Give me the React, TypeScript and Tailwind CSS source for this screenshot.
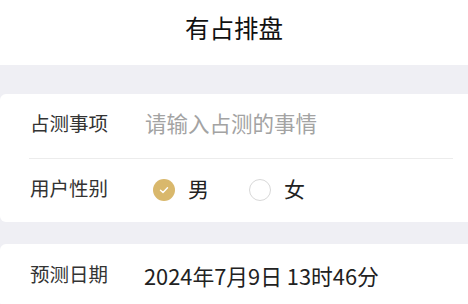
import React from "react";

export default function App() {
  const font = { fontFamily: 'Roboto, "Noto Sans CJK SC", "Noto Sans", sans-serif' };
  const dateFont = { fontFamily: '"Liberation Sans Narrow", "Noto Sans CJK SC", sans-serif' };
  return (
    <div className="w-[468px] h-[304px] overflow-hidden bg-[#efeff4]" style={font}>
      <div className="h-[65px] bg-white flex items-center justify-center pb-[4px]">
        <span className="text-[24.5px] font-normal text-[#111] leading-none">有占排盘</span>
      </div>
      <div className="h-[29px]" />
      <div className="bg-white rounded-l-[6px]">
        <div className="h-[64px] flex items-center pl-[30px] pb-[3px]">
          <span className="w-[115px] text-[19.5px] text-[#333] leading-none">占测事项</span>
          <span className="text-[21.5px] text-[#a3a3a3] leading-none">请输入占测的事情</span>
        </div>
        <div className="h-px bg-[#ececec] ml-[29px] mr-[15px]" />
        <div className="h-[63px] flex items-center pl-[30px] pb-[1px]">
          <span className="w-[123px] text-[19.5px] text-[#333] leading-none">用户性别</span>
          <div className="flex items-center">
            <span className="w-[22px] h-[22px] rounded-full bg-[#d9b86c] flex items-center justify-center">
              <svg width="12" height="12" viewBox="0 0 12 12" fill="none">
                <path d="M2.5 6.2 L5 8.5 L9.5 3.8" stroke="white" strokeWidth="1.4" strokeLinecap="round" strokeLinejoin="round" />
              </svg>
            </span>
            <span className="ml-[13px] text-[21px] text-[#222] leading-none">男</span>
          </div>
          <div className="flex items-center ml-[40px]">
            <span className="w-[22px] h-[22px] rounded-full border border-[#d8d8d8] bg-white" />
            <span className="ml-[13px] text-[21px] text-[#222] leading-none">女</span>
          </div>
        </div>
      </div>
      <div className="h-[22px]" />
      <div className="bg-white rounded-l-[6px]">
        <div className="h-[64px] flex items-center pl-[30px] pb-[1px]">
          <span className="w-[114px] text-[19.5px] text-[#333] leading-none">预测日期</span>
          <span className="text-[21.8px] text-[#222] leading-none" style={dateFont}>2024年7月9日 13时46分</span>
        </div>
      </div>
    </div>
  );
}
